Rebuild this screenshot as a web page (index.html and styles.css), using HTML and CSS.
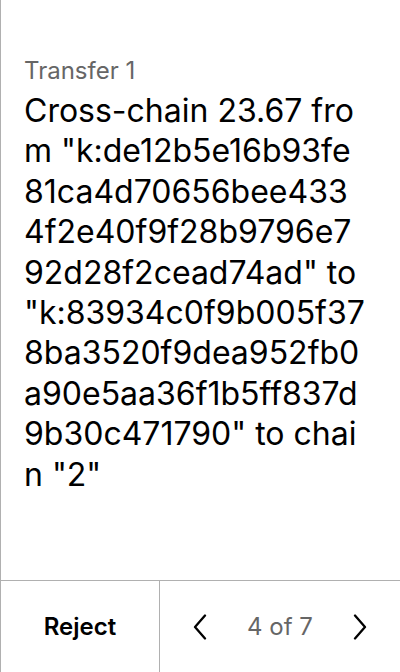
FILE: index.html
```html
<!DOCTYPE html>
<html>
<head>
<meta charset="utf-8">
<link rel="stylesheet" href="styles.css">
</head>
<body>
<div class="screen">
  <main class="content">
    <div class="label">Transfer 1</div>
    <div class="message">Cross-chain 23.67 from "k:de12b5e16b93fe81ca4d70656bee4334f2e40f9f28b9796e792d28f2cead74ad" to "k:83934c0f9b005f378ba3520f9dea952fb0a90e5aa36f1b5ff837d9b30c471790" to chain "2"</div>
  </main>
  <footer class="footer">
    <div class="reject">Reject</div>
    <div class="pager">
      <svg class="chev" width="14" height="26" viewBox="0 0 14 26"><path d="M12 1.5 L2 13 L12 24.5" fill="none" stroke="#000" stroke-width="2.3" stroke-linecap="round" stroke-linejoin="round"/></svg>
      <span class="count">4 of 7</span>
      <svg class="chev" width="14" height="26" viewBox="0 0 14 26"><path d="M2 1.5 L12 13 L2 24.5" fill="none" stroke="#000" stroke-width="2.3" stroke-linecap="round" stroke-linejoin="round"/></svg>
    </div>
  </footer>
</div>
</body>
</html>
```
FILE: styles.css
```css
* { box-sizing: border-box; }
html, body { margin: 0; padding: 0; background: #fff; }
body { font-family: Inter, "Noto Sans", sans-serif; color: #000; }
.screen {
  width: 400px;
  height: 672px;
  display: flex;
  flex-direction: column;
  border-left: 1px solid #b0b0b0;
}
.content {
  flex: 1;
  padding: 55px 32px 0 23px;
}
.label {
  font-size: 24px;
  line-height: 32px;
  color: #666;
  margin-bottom: 4px;
}
.message {
  font-size: 32px;
  line-height: 40.4px;
  word-break: break-all;
}
.footer {
  height: 92px;
  border-top: 1px solid #b0b0b0;
  display: grid;
  grid-template-columns: 159px 1fr;
}
.reject {
  display: flex;
  align-items: center;
  justify-content: center;
  font-size: 24px;
  font-weight: 600;
  border-right: 1px solid #b0b0b0;
}
.pager {
  display: flex;
  align-items: center;
  justify-content: space-between;
  padding: 0 33px 0 33px;
}
.count {
  font-size: 24px;
  color: #666;
}
```
